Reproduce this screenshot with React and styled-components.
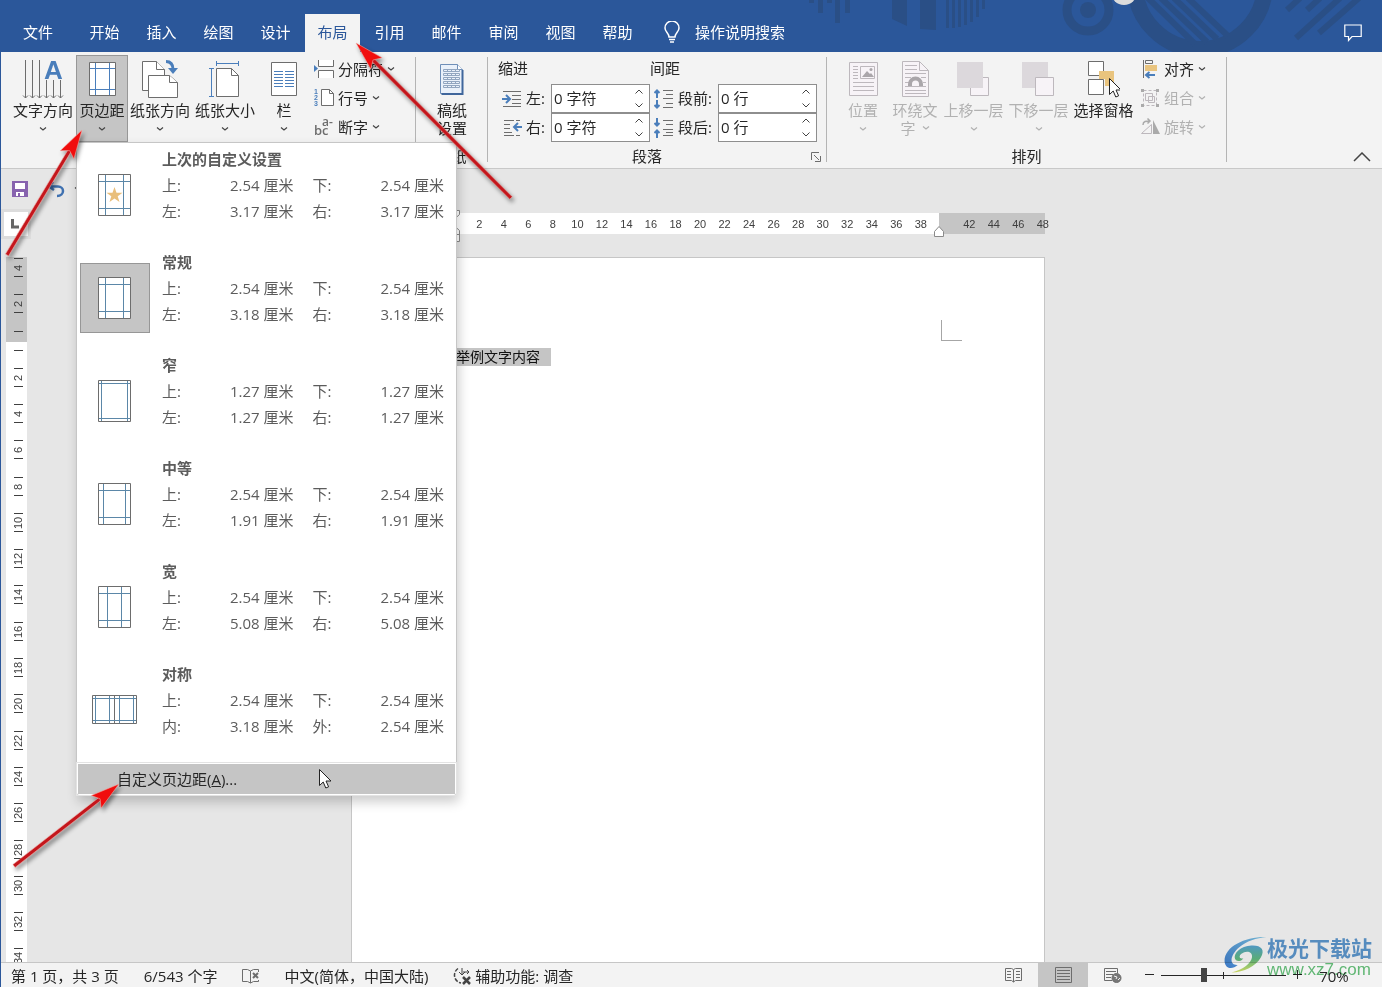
import { useState } from "react";
import styled, { createGlobalStyle, css } from "styled-components";

const GlobalStyle = createGlobalStyle`
    * {
        box-sizing: border-box;
    }

    body {
        margin: 0;
        background-color: #e6e6e6;
        color: #262626;
        font-family: "Open Sans", "Noto Sans CJK SC", sans-serif;
        font-size: 15px;
        line-height: 18px;
    }

    button, input {
        margin: 0;
        padding: 0;
        border: none;
        background: none;
        color: inherit;
        font: inherit;
    }

    svg {
        display: block;
        flex: none;
    }
`;

const Window = styled.div`
    position: relative;
    display: flex;
    flex-direction: column;
    height: 100vh;
    overflow: hidden;
    border-left: 1px solid #2b579a;
`;

/* title bar */

const TitleBar = styled.header`
    position: relative;
    display: flex;
    align-items: flex-end;
    flex: none;
    height: 52px;
    background-color: #2b579a;
    color: #fff;
`;

const Ornament = styled.svg`
    position: absolute;
    top: 0;
    right: 0;
`;

const TabList = styled.nav`
    display: flex;
    gap: 2px;
`;

const Tab = styled.button`
    width: ${({ $wide }) => ($wide ? "74px" : "55px")};
    height: 38px;
    padding-bottom: 2px;
    background-color: ${({ $active }) => ($active ? "#f3f3f3" : "transparent")};
    color: ${({ $active }) => ($active ? "#2b579a" : "#fff")};
`;

const TellMe = styled.button`
    display: flex;
    align-items: center;
    gap: 15px;
    height: 38px;
    margin-left: 19px;
    padding-bottom: 2px;
`;

const CommentButton = styled.button`
    position: relative;
    display: grid;
    place-items: center;
    width: 58px;
    height: 38px;
    margin-left: auto;
`;

/* ribbon */

const Ribbon = styled.section`
    position: relative;
    z-index: 2;
    display: flex;
    flex: none;
    height: 117px;
    background-color: #f3f3f3;
    border-bottom: 1px solid #c8c8c8;
`;

const Group = styled.div`
    display: flex;
    flex-direction: column;
    padding-top: 3px;
`;

const GroupBody = styled.div`
    display: flex;
    height: 87px;
    padding: 0 ${({ $right }) => $right || 0}px 0 ${({ $left }) => $left || 0}px;
`;

const GroupFooter = styled.div`
    display: flex;
    align-items: center;
    height: 26px;
    padding-top: 2px;
`;

const GroupLabel = styled.span`
    flex: 1;
    text-align: center;
`;

const Launcher = styled.button`
    display: grid;
    place-items: center;
    width: 20px;
    height: 20px;
    padding-top: 2px;
`;

const Divider = styled.div`
    width: 1px;
    margin: 5px 0 6px;
    background-color: #b4b4b4;
`;

const MenuAnchor = styled.div`
    position: relative;
`;

const BigButton = styled.button`
    display: flex;
    flex-direction: column;
    align-items: center;
    width: ${({ $width }) => $width}px;
    height: 87px;
    padding-top: 4px;
    border: 1px solid transparent;
    white-space: nowrap;

    ${({ $pressed }) => $pressed && css`
        border-color: #979797;
        background-color: #c5c5c5;
    `}

    &:disabled {
        color: #b1b1b1;
    }
`;

const BigIcon = styled.span`
    display: flex;
    justify-content: center;
    height: 41px;
`;

const BigLabel = styled.span`
    display: flex;
    align-items: center;
    justify-content: center;
    gap: 6px;
    height: 18px;
`;

const BigChevron = styled.span`
    padding-top: 8px;
`;

const SmallColumn = styled.div`
    display: flex;
    flex-direction: column;
    align-items: flex-start;
    margin-left: ${({ $gap }) => $gap}px;
`;

const SmallButton = styled.button`
    display: flex;
    align-items: center;
    gap: 4px;
    height: 29px;
    padding-bottom: 2px;
    white-space: nowrap;

    &:disabled {
        color: #b1b1b1;
    }
`;

const SmallIcon = styled.span`
    width: ${({ $width }) => $width}px;
`;

const FieldColumn = styled.div`
    width: ${({ $width }) => $width}px;
`;

const FieldHeading = styled.div`
    height: 29px;
    line-height: 27px;
`;

const Field = styled.div`
    display: flex;
    align-items: center;
    gap: 4px;
    height: 29px;
    padding-left: 4px;
`;

const FieldLabel = styled.label`
    flex: 1;
    padding-bottom: 2px;
    white-space: nowrap;
`;

const Spinner = styled.div`
    display: flex;
    width: 99px;
    height: 29px;
    border: 1px solid #8e8e8e;
    background-color: #fff;
`;

const SpinnerInput = styled.input`
    width: 77px;
    padding: 0 0 2px 2px;
`;

const SpinnerArrows = styled.div`
    display: flex;
    flex-direction: column;
    width: 20px;
`;

const ArrowButton = styled.button`
    display: grid;
    place-items: center;
    flex: 1;
`;

const CollapseButton = styled.button`
    align-self: flex-end;
    display: grid;
    place-items: center;
    width: 40px;
    height: 22px;
    margin-left: auto;
`;

/* margins menu */

const Menu = styled.div`
    position: absolute;
    top: 100%;
    left: 0;
    width: 381px;
    border: 1px solid #c6c6c6;
    border-radius: 0 0 3px 3px;
    background-color: #fff;
    box-shadow: 2px 6px 12px rgba(0, 0, 0, 0.2);
    color: #5c5c5c;
`;

const Preset = styled.button`
    display: flex;
    gap: 12px;
    width: 100%;
    height: 103px;
    padding: 3px 12px 0 3px;
    text-align: left;
`;

const PresetIcon = styled.span`
    display: grid;
    place-items: center;
    width: 70px;
    height: 70px;
    margin-top: 14px;
    border: 1px solid ${({ $selected }) => ($selected ? "#979797" : "transparent")};
    background-color: ${({ $selected }) => ($selected ? "#c5c5c5" : "transparent")};
`;

const PresetText = styled.span`
    display: grid;
    flex: 1;
    grid-template-columns: 1fr 1fr;
    grid-auto-rows: 26px;
    column-gap: 19px;
    line-height: 26px;
`;

const PresetName = styled.strong`
    grid-column: 1 / -1;
`;

const Measure = styled.span`
    display: flex;
    justify-content: space-between;
`;

const CustomMargins = styled.button`
    display: block;
    width: calc(100% - 2px);
    height: 30px;
    margin: 3px 1px 1px;
    padding-left: 39px;
    outline: 1px solid #e3e3e3;
    outline-offset: 1px;
    background-color: #c5c5c5;
    color: #262626;
    text-align: left;
`;

const Pointer = styled.svg`
    position: absolute;
    left: 242px;
    bottom: 6px;
`;

/* document area */

const Workspace = styled.main`
    position: relative;
    display: grid;
    flex: 1;
    grid-template-columns: 27px 1fr;
    grid-template-rows: 40px 48px 1fr;
    min-height: 0;
`;

const QuickAccess = styled.div`
    grid-column: 1 / -1;
    display: flex;
    align-items: center;
    gap: 19px;
    padding-left: 11px;
`;

const QuickButton = styled.button`
    display: flex;
    align-items: center;
    gap: 9px;
    height: 18px;
`;

const TabStop = styled.button`
    display: grid;
    place-items: center;
    width: 30px;
    height: 30px;
    border: 3px solid #dcdcdc;
    background-color: #fff;
`;

const RulerTrack = styled.div`
    display: flex;
    justify-content: center;
    padding: 4px 14px 0 0;
`;

const Ruler = styled.div`
    position: relative;
    display: flex;
    width: 694px;
    height: 21px;
    color: #404040;
    font: 11px/23px "Liberation Sans", sans-serif;
    text-align: center;
`;

const RulerPart = styled.div`
    width: ${({ $width }) => $width}px;
    padding: 0 ${({ $right }) => $right || 0}px 0 ${({ $left }) => $left || 0}px;
    background-color: ${({ $margin }) => ($margin ? "#c5c5c5" : "#fff")};
`;

const RulerNumbers = styled.div`
    display: flex;
    width: ${({ $width }) => $width}px;
`;

const RulerNumber = styled.span`
    flex: 1;
`;

const RightIndent = styled.svg`
    position: absolute;
    left: 582px;
    top: 12px;
`;

const LeftIndent = styled.svg`
    position: absolute;
    left: 98px;
    top: -4px;
`;

const SideRuler = styled.div`
    width: 21px;
    margin-left: 5px;
    overflow: hidden;
    background-color: #fff;
    color: #404040;
    font: 11px/9px "Liberation Sans", sans-serif;
`;

const SideMargin = styled.div`
    display: flex;
    flex-direction: column;
    align-items: center;
    justify-content: flex-end;
    gap: 9px;
    height: 85px;
    padding: 0 0 10px 3px;
    overflow: hidden;
    background-color: #c5c5c5;
`;

const SideBody = styled.div`
    display: flex;
    flex-direction: column;
    align-items: center;
    gap: 8px;
    padding: 8px 0 0 3px;
`;

const SideNumbers = styled.div`
    display: flex;
    flex: none;
    flex-direction: column;
    height: ${({ $height }) => $height}px;
`;

const SideStep = styled.div`
    display: flex;
    flex: 1 0 0;
    flex-direction: column;
    align-items: center;
    justify-content: center;
`;

const SideLabel = styled.span`
    display: grid;
    place-items: center;
    width: 9px;
    height: 19px;
    border: solid #404040;
    border-width: 1px 0;
    writing-mode: vertical-rl;
    transform: rotate(180deg);
`;

const SideTick = styled.span`
    flex: none;
    width: 9px;
    height: 1px;
    background-color: #404040;
`;

const PageTrack = styled.div`
    display: flex;
    justify-content: center;
    min-height: 0;
    padding-right: 14px;
    overflow: hidden;
`;

const Page = styled.article`
    width: 694px;
    border: 1px solid #c6c6c6;
    border-bottom: none;
    background-color: #fff;
`;

const PageTop = styled.div`
    display: flex;
    align-items: flex-end;
    justify-content: flex-end;
    height: 83px;
    padding-right: 82px;
`;

const CropMark = styled.div`
    width: 21px;
    height: 21px;
    border: solid #a6a6a6;
    border-width: 0 0 1px 1px;
`;

const Paragraph = styled.p`
    margin: 7px 0 0 104px;
    color: #111;
    font-size: 14px;
`;

const Selection = styled.mark`
    display: inline-block;
    padding-right: 11px;
    background-color: #c5c5c5;
    color: inherit;
`;

/* status bar */

const StatusBar = styled.footer`
    display: flex;
    flex: none;
    align-items: center;
    height: 25px;
    padding: 0 33px 0 10px;
    border-top: 1px solid #c6c6c6;
    background-color: #f3f3f3;
    white-space: nowrap;
`;

const StatusItem = styled.button`
    display: flex;
    align-items: center;
    gap: 3px;
    height: 24px;
    margin-right: 25px;
    padding-top: 2px;
`;

const ViewButton = styled.button`
    display: grid;
    place-items: center;
    width: 50px;
    height: 24px;
    background-color: ${({ $active }) => ($active ? "#c5c5c5" : "transparent")};
`;

const Views = styled.div`
    display: flex;
    margin-left: auto;
`;

const ZoomButton = styled.button`
    display: grid;
    place-items: center;
    width: 23px;
    height: 24px;
`;

const ZoomSlider = styled.input`
    appearance: none;
    width: 125px;
    height: 14px;
    background:
        linear-gradient(#262626, #262626) 62px 4px / 1px 7px no-repeat,
        linear-gradient(#262626, #262626) 0 7px / 100% 1px no-repeat;

    &::-webkit-slider-thumb {
        appearance: none;
        width: 6px;
        height: 14px;
        background-color: #444;
    }
`;

const ZoomValue = styled.button`
    width: 30px;
    height: 24px;
    margin-left: 10px;
    padding-top: 2px;
`;

/* things lying over the window */

const Arrows = styled.svg`
    position: absolute;
    inset: 0 auto auto -1px;
    z-index: 4;
    width: 100%;
    height: 100%;
    pointer-events: none;
    filter: drop-shadow(2px 3px 2px rgba(0, 0, 0, 0.45));
`;

const Watermark = styled.div`
    position: absolute;
    right: 10px;
    bottom: 6px;
    z-index: 3;
    display: flex;
    mix-blend-mode: multiply;
    pointer-events: none;
`;

const WatermarkText = styled.div`
    display: flex;
    flex-direction: column;
    color: #5f9bd3;
    font: bold 21px/24px "Noto Sans CJK SC", sans-serif;
`;

const WatermarkSite = styled.span`
    color: #66c07a;
    font: 17px/22px "Liberation Sans", sans-serif;
`;

const GRAY = "#6d6d6d";
const BLUE = "#4a7ebb";
const PALE = "#bdb8bd";

function Chevron({ color = "#444" }) {
    return (
        <svg width="8" height="4" viewBox="0 0 8 4" fill="none" stroke={color} strokeWidth="1.200">
            <path d="M1 .5l3 2.500 3-2.500" />
        </svg>
    );
}

function TextDirectionIcon() {
    const long = [3.5, 10.5, 17.5];
    const short = [24.5, 31.5, 38.5];
    return (
        <svg width="42" height="40" viewBox="0 0 42 40" fill="none" stroke={GRAY}>
            {long.map((x) => <path key={x} d={`M${x} 0v38M${x - 2.5} 35.5l2.5 2.5 2.5-2.5`} />)}
            {short.map((x) => <path key={x} d={`M${x} 20v18M${x - 2.5} 35.5l2.5 2.5 2.5-2.5`} />)}
            <text x="22" y="19" fill={BLUE} stroke="none" fontSize="26" fontWeight="bold" fontFamily="Liberation Sans, sans-serif">A</text>
        </svg>
    );
}

function MarginsIcon() {
    return (
        <svg width="28" height="38" viewBox="-1 0 28 38" fill="none">
            <path d="M.5 2.500h26v33H.5z" fill="#fff" stroke={GRAY} />
            <path d="M6.500 3v32M20.500 3v32M1 8.500h25M1 29.500h25" stroke={BLUE} />
        </svg>
    );
}

function OrientationIcon() {
    return (
        <svg width="38" height="40" viewBox="-1 0 38 40" fill="#fff" stroke={GRAY}>
            <path d="M.5 1.500h14l8 8v21H.5z" />
            <path d="M14.500 1.500v8h8" />
            <path d="M6.500 15.500h21l8 7v15h-29z" />
            <path d="M27.500 15.500v7h8" />
            <path d="M24 1.500c5 0 7 3 7 8" fill="none" stroke={BLUE} strokeWidth="3" />
            <path d="M26 8h10l-5 6z" fill={BLUE} stroke="none" />
        </svg>
    );
}

function SizeIcon() {
    return (
        <svg width="32" height="40" viewBox="0 0 32 40" fill="none" stroke={BLUE}>
            <path d="M7.500 8.500h15l7 7v21h-22z" fill="#fff" stroke={GRAY} />
            <path d="M22.500 8.500v7h7" stroke={GRAY} />
            <path d="M7.500 3.500h22M7.500 1v5M29.500 1v5M2.500 8.500v28M0 8.500h5M0 36.500h5" />
        </svg>
    );
}

function ColumnsIcon() {
    const rows = [11.5, 14.5, 17.5, 20.5, 23.5, 26.5];
    return (
        <svg width="26" height="38" viewBox="0 0 26 38" fill="none">
            <path d="M.5 2.500h25v33H.5z" fill="#fff" stroke={GRAY} />
            {rows.map((y) => <path key={y} d={`M3 ${y}h9M14 ${y}h9`} stroke={BLUE} />)}
        </svg>
    );
}

function BreaksIcon() {
    return (
        <svg width="20" height="20" viewBox="0 0 20 20" fill="none" stroke={GRAY}>
            <path d="M4.500 1v6.500h15V1M4.500 19v-7.500h15V19" fill="#fff" />
            <path d="M0 6v7l4-3.500z" fill={BLUE} stroke="none" />
        </svg>
    );
}

function LineNumbersIcon() {
    return (
        <svg width="20" height="20" viewBox="0 0 20 20" fill="none" stroke={GRAY}>
            <path d="M7.500 1.500h8l4 4v12h-12z" fill="#fff" />
            <path d="M15.500 1.500v4h4" />
            <g fill={BLUE} stroke="none" fontSize="7" fontWeight="bold" fontFamily="Liberation Sans, sans-serif">
                <text x="0" y="6">1</text>
                <text x="0" y="12">2</text>
                <text x="0" y="18">3</text>
            </g>
        </svg>
    );
}

function HyphenIcon() {
    return (
        <svg width="20" height="20" viewBox="0 0 20 20" fill={GRAY} fontFamily="Open Sans, sans-serif" fontWeight="600">
            <text x="0" y="18" fontSize="13">bc</text>
            <text x="8" y="9" fontSize="12">a-</text>
        </svg>
    );
}

function ManuscriptIcon() {
    const rows = [9, 13, 17, 21, 25];
    return (
        <svg width="26" height="38" viewBox="0 0 26 38" fill="none">
            <path d="M1.500 4.500h17l5 5v24h-22z" fill="#eaf1fa" stroke="#6f8fb8" />
            <path d="M23.500 10v24h-21" stroke="#3f669c" strokeWidth="2" />
            <path d="M18.500 4.500v5h5" fill="#fff" stroke="#6f8fb8" />
            {rows.map((y) => <path key={y} d={`M4.500 ${y + .5}h16v2h-16zM8.500 ${y + .5}v2M12.500 ${y + .5}v2M16.500 ${y + .5}v2`} stroke="#92a6c0" />)}
        </svg>
    );
}

function IndentLeftIcon() {
    return (
        <svg width="20" height="18" viewBox="0 0 20 18" fill="none" stroke={GRAY}>
            <path d="M1 1.500h18M10 5.500h9M10 9.500h9M10 13.500h9M1 16.500h18" />
            <path d="M0 9h8M4 5l4 4-4 4" stroke={BLUE} strokeWidth="2" />
        </svg>
    );
}

function IndentRightIcon() {
    return (
        <svg width="20" height="18" viewBox="0 0 20 18" fill="none" stroke={GRAY}>
            <path d="M2 1.500h10M14 1.500h4M2 5.500h6M2 9.500h6M2 13.500h8M2 16.500h10M14 16.500h4" />
            <path d="M20 8h-8M16 4l-4 4 4 4" stroke={BLUE} strokeWidth="2" />
        </svg>
    );
}

function SpaceBeforeIcon() {
    return (
        <svg width="20" height="20" viewBox="0 0 20 20" fill="none" stroke={GRAY}>
            <path d="M9 1.500h10M12 5.500h7M9 9.500h10M12 14.500h7M9 18.500h10" />
            <path d="M3 9V1M.5 4L3 1.500 5.500 4M3 11v8M.5 16L3 18.500 5.500 16" stroke={BLUE} strokeWidth="2" />
        </svg>
    );
}

function SpaceAfterIcon() {
    return (
        <svg width="20" height="20" viewBox="0 0 20 20" fill="none" stroke={GRAY}>
            <path d="M9 2.500h10M12 6.500h7M9 11.500h10M12 14.500h7M9 17.500h10" />
            <path d="M3 0v8M.5 5L3 7.500 5.500 5M3 20v-8M.5 15L3 12.500 5.500 15" stroke={BLUE} strokeWidth="2" />
        </svg>
    );
}

function PositionIcon() {
    return (
        <svg width="30" height="38" viewBox="-1 0 30 38" fill="none" stroke={PALE}>
            <path d="M.5 2.500h28v33H.5z" fill="#f7f3f7" />
            <path d="M11.500 6.500h14v12h-14z" />
            <path d="M13 17l5-6 3 3 1-1 3 4z" fill="#aaa6aa" stroke="none" />
            <circle cx="22" cy="9.500" r="1.500" fill="#aaa6aa" stroke="none" />
            <path d="M4 6.500h5M4 9.500h5M4 12.500h5M4 15.500h5M4 18.500h5M4 22.500h21M4 26.500h21M4 30.500h21" />
        </svg>
    );
}

function WrapIcon() {
    return (
        <svg width="28" height="38" viewBox="-1 0 28 38" fill="none" stroke={PALE}>
            <path d="M.5 1.500h17l9 9v26H.5z" fill="#f7f3f7" />
            <path d="M17.500 1.500v9h9" />
            <path d="M3 5.500h12M3 9.500h12M3 13.500h21M3 17.500h6M19 17.500h5M3 22.500h4M21 22.500h3M3 26.500h21M3 30.500h21M3 33.500h21" />
            <path d="M8 26v-2a5.500 5.500 0 0 1 11 0v2" strokeWidth="4" stroke="#aaa6aa" />
        </svg>
    );
}

function ForwardIcon() {
    return (
        <svg width="33" height="38" viewBox="0 0 33 38">
            <path d="M13.500 17.500h18v18h-18z" fill="#f7f3f7" stroke={PALE} />
            <path d="M0 2h26v26H0z" fill="#dcd8dc" />
        </svg>
    );
}

function BackwardIcon() {
    return (
        <svg width="33" height="38" viewBox="0 0 33 38">
            <path d="M0 2h26v26H0z" fill="#dcd8dc" />
            <path d="M13.500 17.500h18v18h-18z" fill="#f7f3f7" stroke={PALE} />
        </svg>
    );
}

function CursorShape() {
    return <path d="M.5.500v16l3.700-3.500 2.600 6 2.800-1.200-2.600-5.800h5z" fill="#fff" stroke="#222" />;
}

function SelectionPaneIcon() {
    return (
        <svg width="32" height="38" viewBox="0 0 32 38">
            <path d="M.5 1.500h15v14H.5zM.5 19.500h15v15H.5z" fill="#fff" stroke={GRAY} />
            <path d="M11 11h15v15h-9v-7h-6z" fill="#e9c47e" />
            <g transform="translate(21 18)"><CursorShape /></g>
        </svg>
    );
}

function AlignIcon() {
    return (
        <svg width="18" height="20" viewBox="0 0 18 20" fill="none">
            <path d="M2.500 1v18M4.500 1.500h7v3h-7z" stroke={GRAY} />
            <path d="M4 6h12v6H4z" fill="#e9c47e" />
            <path d="M14 16H5M8.500 13L5 16l3.500 3" stroke={BLUE} strokeWidth="2" />
        </svg>
    );
}

function GroupIcon() {
    return (
        <svg width="18" height="20" viewBox="0 0 18 20" fill="none" stroke={PALE}>
            <path d="M2.500 2.500h13v15h-13z" strokeDasharray="3 2" />
            <path d="M4.500 5.500h7v7h-7zM7.500 8.500h6v6h-6z" />
            <path d="M0 1h3v3H0zM15 1h3v3h-3zM0 16h3v3H0zM15 16h3v3h-3z" fill="#aaa" stroke="none" />
        </svg>
    );
}

function RotateIcon() {
    return (
        <svg width="19" height="18" viewBox="0 0 19 18" fill="none" stroke={PALE}>
            <path d="M.5 15.500h10v-9z" />
            <path d="M12 2v14h7z" fill="#aaa" stroke="none" />
            <path d="M2 7c0-4 3-4 7-4M6.500.500L9 3 6.500 5.500" stroke="#aaa" strokeWidth="1.500" />
        </svg>
    );
}

function PresetDrawing({ name }) {
    if (name === "对称") {
        return (
            <svg width="46" height="30" viewBox="0 0 46 30" fill="none">
                <path d="M.5.500h44v28H.5zM22.500.500v28" fill="#fff" stroke={GRAY} />
                <path d="M3.500 1v27M17.500 1v27M27.500 1v27M41.500 1v27M1 3.500h43M1 25.500h43" stroke="#5b87a8" />
            </svg>
        );
    }
    const insets = { 窄: [3, 3], 中等: [5, 7], 宽: [9, 7] };
    const [x, y] = insets[name] || [7, 7];
    return (
        <svg width="34" height="42" viewBox="0 0 34 42" fill="none">
            <path d="M.5.500h32v41H.5z" fill="#fff" stroke={GRAY} />
            <path d={`M${x + .5} 1v40M${32.5 - x} 1v40M1 ${y + .5}h31M1 ${41.5 - y}h31`} stroke="#5b87a8" />
            {name === "上次的自定义设置" && (
                <path d="M16.500 13l2 5.800h6l-4.800 3.500 1.800 5.700-5-3.500-5 3.500 1.800-5.700-4.800-3.500h6z" fill="#e9bf7b" />
            )}
        </svg>
    );
}

function TitleOrnament() {
    const fine = [28, 28, 27, 25, 22, 17, 9];
    return (
        <Ornament width="582" height="52" viewBox="800 0 582 52" fill="#2a4f86" stroke="none">
            <path d="M809 0h5v3h-5zM818 0h5v13h-5zM827 0h5v3h-5zM835 0h5v23h-5zM845 0h5v13h-5z" />
            <path d="M892 0h15v26l-15-7zM920 0h16v30l-16-1z" />
            {fine.map((h, i) => <rect key={i} x={946 + i * 6} y="0" width="3" height={h} />)}
            <circle cx="1088" cy="10" r="21" fill="none" stroke="#2a4f86" strokeWidth="9" />
            <circle cx="1088" cy="10" r="8" />
            <circle cx="1200" cy="-16" r="65" fill="none" stroke="#2a4f86" strokeWidth="16" />
            <path d="M1148-2l47 46M1161-2l46 44M1174-2l43 41M1188-2l40 38" stroke="#2a4f86" strokeWidth="6" />
            <path d="M1300-2l-13 12M1320-2l-13 12M1340-2l-44 40M1359-2l-40 35" stroke="#2a4f86" strokeWidth="6" />
            <circle cx="1124" cy="-8" r="13" fill="#dcdcdc" />
        </Ornament>
    );
}

function Arrow({ from, to }) {
    const [x1, y1] = from;
    const [x2, y2] = to;
    const length = Math.hypot(x2 - x1, y2 - y1);
    const angle = (Math.atan2(y2 - y1, x2 - x1) * 180) / Math.PI;
    return (
        <g transform={`translate(${x1} ${y1}) rotate(${angle})`} stroke="#f2b0a8" strokeWidth="0.5">
            <path d={`M0-1.800H${length - 20}v3.600H0z`} fill="#c4161c" />
            <path d={`M${length} 0l-29-8 5 8-5 8z`} fill="#f00d0d" />
        </g>
    );
}

const TABS = ["文件", "开始", "插入", "绘图", "设计", "布局", "引用", "邮件", "审阅", "视图", "帮助"];

const PRESETS = [
    { name: "上次的自定义设置", values: [["上:", "2.54"], ["下:", "2.54"], ["左:", "3.17"], ["右:", "3.17"]] },
    { name: "常规", values: [["上:", "2.54"], ["下:", "2.54"], ["左:", "3.18"], ["右:", "3.18"]] },
    { name: "窄", values: [["上:", "1.27"], ["下:", "1.27"], ["左:", "1.27"], ["右:", "1.27"]] },
    { name: "中等", values: [["上:", "2.54"], ["下:", "2.54"], ["左:", "1.91"], ["右:", "1.91"]] },
    { name: "宽", values: [["上:", "2.54"], ["下:", "2.54"], ["左:", "5.08"], ["右:", "5.08"]] },
    { name: "对称", values: [["上:", "2.54"], ["下:", "2.54"], ["内:", "3.18"], ["外:", "2.54"]] },
];

const evens = (from, to) => Array.from({ length: (to - from) / 2 + 1 }, (_, i) => from + i * 2);

function RibbonButton({ label, icon, width, disabled, pressed, plain }) {
    return (
        <BigButton $width={width} $pressed={pressed} disabled={disabled}>
            <BigIcon>{icon}</BigIcon>
            <BigLabel>{label}</BigLabel>
            {!plain && <BigChevron><Chevron color={disabled ? "#b1b1b1" : "#444"} /></BigChevron>}
        </BigButton>
    );
}

function RibbonItem({ label, icon, width, disabled }) {
    return (
        <SmallButton disabled={disabled}>
            <SmallIcon $width={width}>{icon}</SmallIcon>
            {label}
            <Chevron color={disabled ? "#b1b1b1" : "#444"} />
        </SmallButton>
    );
}

function SpinField({ id, label, icon, initial }) {
    const [value, setValue] = useState(initial);
    return (
        <Field>
            {icon}
            <FieldLabel htmlFor={id}>{label}</FieldLabel>
            <Spinner>
                <SpinnerInput id={id} value={value} onChange={(e) => setValue(e.target.value)} />
                <SpinnerArrows>
                    <ArrowButton>
                        <svg width="8" height="5" viewBox="0 0 8 5" fill="none" stroke="#444"><path d="M.5 4.500L4 1l3.500 3.500" /></svg>
                    </ArrowButton>
                    <ArrowButton>
                        <svg width="8" height="5" viewBox="0 0 8 5" fill="none" stroke="#444"><path d="M.5.500L4 4 7.500.500" /></svg>
                    </ArrowButton>
                </SpinnerArrows>
            </Spinner>
        </Field>
    );
}

function MarginsMenu() {
    return (
        <Menu>
            {PRESETS.map(({ name, values }) => (
                <Preset key={name}>
                    <PresetIcon $selected={name === "常规"}><PresetDrawing name={name} /></PresetIcon>
                    <PresetText>
                        <PresetName>{name}</PresetName>
                        {values.map(([side, size]) => (
                            <Measure key={side}><span>{side}</span><span>{size} 厘米</span></Measure>
                        ))}
                    </PresetText>
                </Preset>
            ))}
            <CustomMargins>自定义页边距(<u>A</u>)...</CustomMargins>
            <Pointer width="13" height="20" viewBox="0 0 13 20"><CursorShape /></Pointer>
        </Menu>
    );
}

export default function App() {
    const [activeTab, setActiveTab] = useState("布局");
    const [zoom, setZoom] = useState(34);

    return (
        <Window lang="zh-CN">
            <GlobalStyle />
            <TitleBar>
                <TitleOrnament />
                <TabList>
                    {TABS.map((tab, i) => (
                        <Tab key={tab} $wide={i === 0} $active={tab === activeTab} onClick={() => setActiveTab(tab)}>{tab}</Tab>
                    ))}
                </TabList>
                <TellMe>
                    <svg width="16" height="22" viewBox="0 0 16 22" fill="none" stroke="#fff" strokeWidth="1.500">
                        <path d="M5 16c0-4-4-5-4-9a7 7 0 0 1 14 0c0 4-4 5-4 9zM5 18.500h6M6 21h4" />
                    </svg>
                    操作说明搜索
                </TellMe>
                <CommentButton aria-label="批注">
                    <svg width="18" height="18" viewBox="0 0 18 18" fill="none" stroke="#fff" strokeWidth="1.200">
                        <path d="M.8 1h16.400v11.500H8l-3.500 4v-4H.8z" />
                    </svg>
                </CommentButton>
            </TitleBar>

            <Ribbon>
                <Group>
                    <GroupBody $left={9} $right={20}>
                        <RibbonButton label="文字方向" width={66} icon={<TextDirectionIcon />} />
                        <MenuAnchor>
                            <RibbonButton label="页边距" width={52} icon={<MarginsIcon />} pressed />
                            <MarginsMenu />
                        </MenuAnchor>
                        <RibbonButton label="纸张方向" width={64} icon={<OrientationIcon />} />
                        <RibbonButton label="纸张大小" width={66} icon={<SizeIcon />} />
                        <RibbonButton label="栏" width={52} icon={<ColumnsIcon />} />
                        <SmallColumn $gap={4}>
                            <RibbonItem label="分隔符" width={20} icon={<BreaksIcon />} />
                            <RibbonItem label="行号" width={20} icon={<LineNumbersIcon />} />
                            <RibbonItem label="断字" width={20} icon={<HyphenIcon />} />
                        </SmallColumn>
                    </GroupBody>
                </Group>
                <Divider />
                <Group>
                    <GroupBody $left={10} $right={9}>
                        <BigButton $width={52}>
                            <BigIcon><ManuscriptIcon /></BigIcon>
                            <BigLabel>稿纸</BigLabel>
                            <BigLabel>设置</BigLabel>
                        </BigButton>
                    </GroupBody>
                    <GroupFooter><GroupLabel>稿纸</GroupLabel></GroupFooter>
                </Group>
                <Divider />
                <Group>
                    <GroupBody $left={10} $right={9}>
                        <FieldColumn $width={152}>
                            <FieldHeading>缩进</FieldHeading>
                            <SpinField id="indent-left" label="左:" initial="0 字符" icon={<IndentLeftIcon />} />
                            <SpinField id="indent-right" label="右:" initial="0 字符" icon={<IndentRightIcon />} />
                        </FieldColumn>
                        <FieldColumn $width={167}>
                            <FieldHeading>间距</FieldHeading>
                            <SpinField id="space-before" label="段前:" initial="0 行" icon={<SpaceBeforeIcon />} />
                            <SpinField id="space-after" label="段后:" initial="0 行" icon={<SpaceAfterIcon />} />
                        </FieldColumn>
                    </GroupBody>
                    <GroupFooter>
                        <GroupLabel>段落</GroupLabel>
                        <Launcher aria-label="段落设置">
                            <svg width="10" height="10" viewBox="0 0 10 10" fill="none" stroke={GRAY}>
                                <path d="M.5 8V.500H8M3 3l5 5M9.500 4v5.500H4" />
                            </svg>
                        </Launcher>
                    </GroupFooter>
                </Group>
                <Divider />
                <Group>
                    <GroupBody $left={10} $right={20}>
                        <RibbonButton label="位置" width={52} icon={<PositionIcon />} disabled />
                        <BigButton $width={52} disabled>
                            <BigIcon><WrapIcon /></BigIcon>
                            <BigLabel>环绕文</BigLabel>
                            <BigLabel>字 <Chevron color="#b1b1b1" /></BigLabel>
                        </BigButton>
                        <RibbonButton label="上移一层" width={65} icon={<ForwardIcon />} disabled />
                        <RibbonButton label="下移一层" width={65} icon={<BackwardIcon />} disabled />
                        <RibbonButton label="选择窗格" width={65} icon={<SelectionPaneIcon />} plain />
                        <SmallColumn $gap={5}>
                            <RibbonItem label="对齐" width={19} icon={<AlignIcon />} />
                            <RibbonItem label="组合" width={19} icon={<GroupIcon />} disabled />
                            <RibbonItem label="旋转" width={19} icon={<RotateIcon />} disabled />
                        </SmallColumn>
                    </GroupBody>
                    <GroupFooter><GroupLabel>排列</GroupLabel></GroupFooter>
                </Group>
                <Divider />
                <CollapseButton aria-label="折叠功能区">
                    <svg width="18" height="10" viewBox="0 0 18 10" fill="none" stroke="#444" strokeWidth="1.500">
                        <path d="M1 9l8-8 8 8" />
                    </svg>
                </CollapseButton>
            </Ribbon>

            <Workspace>
                <QuickAccess>
                    <QuickButton aria-label="保存">
                        <svg width="16" height="17" viewBox="0 0 16 17">
                            <path d="M0 0h16v16H0z" fill="#8763ae" />
                            <path d="M3 2h10v6H3zM4 11h8v4H4z" fill="#fff" />
                            <path d="M6 12h2v3H6z" fill="#8763ae" />
                        </svg>
                    </QuickButton>
                    <QuickButton aria-label="撤消">
                        <svg width="18" height="17" viewBox="0 0 18 17" fill="none" stroke="#3f71b0" strokeWidth="2.500">
                            <path d="M6 1L2 5.500 7 9M2 5.500h9c3 0 5 2 5 4.500s-2 5-6 5" />
                        </svg>
                        <Chevron />
                    </QuickButton>
                </QuickAccess>
                <TabStop aria-label="制表符">
                    <svg width="10" height="10" viewBox="0 0 10 10" fill="none" stroke="#666" strokeWidth="3">
                        <path d="M1.500 0v8H8" />
                    </svg>
                </TabStop>
                <RulerTrack>
                    <Ruler>
                        <RulerPart $width={104} $margin />
                        <RulerPart $width={484} $left={12} $right={6}>
                            <RulerNumbers $width={466}>
                                {evens(2, 38).map((n) => <RulerNumber key={n}>{n}</RulerNumber>)}
                            </RulerNumbers>
                        </RulerPart>
                        <RulerPart $width={106} $left={18} $margin>
                            <RulerNumbers $width={98}>
                                {evens(42, 48).map((n) => <RulerNumber key={n}>{n}</RulerNumber>)}
                            </RulerNumbers>
                        </RulerPart>
                        <LeftIndent width="12" height="33" viewBox="0 0 12 33" fill="#fff" stroke="#8a8a8a">
                            <path d="M1.500 1.500h9v4l-4.500 4-4.500-4zM1.500 32.500v-11l4.500-4 4.500 4v11zM1.500 25.500h9" />
                        </LeftIndent>
                        <RightIndent width="12" height="13" viewBox="0 0 12 13" fill="#fff" stroke="#8a8a8a">
                            <path d="M1.500 11.500v-5l4.500-5 4.500 5v5z" />
                        </RightIndent>
                    </Ruler>
                </RulerTrack>
                <SideRuler>
                    <SideMargin>
                        <SideNumbers $height={73}>
                            <SideStep><SideLabel>4</SideLabel></SideStep>
                            <SideStep><SideLabel>2</SideLabel></SideStep>
                        </SideNumbers>
                        <SideTick />
                    </SideMargin>
                    <SideBody>
                        <SideTick />
                        <SideNumbers $height={617}>
                            {evens(2, 34).map((n) => <SideStep key={n}><SideLabel>{n}</SideLabel></SideStep>)}
                        </SideNumbers>
                    </SideBody>
                </SideRuler>
                <PageTrack>
                    <Page>
                        <PageTop><CropMark /></PageTop>
                        <Paragraph><Selection>举例文字内容</Selection></Paragraph>
                    </Page>
                </PageTrack>
            </Workspace>

            <StatusBar>
                <StatusItem>第 1 页，共 3 页</StatusItem>
                <StatusItem>6/543 个字</StatusItem>
                <StatusItem aria-label="校对">
                    <svg width="17" height="16" viewBox="0 0 17 16" fill="none" stroke={GRAY}>
                        <path d="M16.500 4V1.500h-5l-3 1.500-3-1.500h-5v12h5l3 1.500 3-1.500h5V12M8.500 3v12" />
                        <path d="M11 5l5 5M16 5l-5 5" strokeWidth="2" />
                    </svg>
                </StatusItem>
                <StatusItem>中文(简体，中国大陆)</StatusItem>
                <StatusItem>
                    <svg width="19" height="18" viewBox="0 0 19 18" fill="none" stroke="#444">
                        <path d="M5 1.500a8 8 0 0 0 3 14.500" strokeDasharray="4 1.500" strokeWidth="1.500" />
                        <path d="M9 1v7M6 5l3 3 3-3M10 5h6M14 3l2 2-2 2" />
                        <path d="M10 10l7 7M17 10l-7 7" strokeWidth="2.500" />
                    </svg>
                    辅助功能: 调查
                </StatusItem>
                <Views>
                    <ViewButton aria-label="阅读视图">
                        <svg width="17" height="16" viewBox="0 0 17 16" fill="none" stroke={GRAY}>
                            <path d="M.5 1.500h6l2 1 2-1h6v12h-6l-2 1.500-2-1.500h-6zM8.500 3v12" />
                            <path d="M2 4.500h4M2 7.500h4M2 10.500h4M11 4.500h4M11 7.500h4M11 10.500h4" />
                        </svg>
                    </ViewButton>
                    <ViewButton aria-label="页面视图" $active>
                        <svg width="17" height="16" viewBox="0 0 17 16" fill="none" stroke={GRAY}>
                            <path d="M.5.500h16v15H.5zM2 3.500h13M2 6.500h13M2 9.500h13M2 12.500h13" />
                        </svg>
                    </ViewButton>
                    <ViewButton aria-label="Web 版式视图">
                        <svg width="18" height="16" viewBox="0 0 18 16" fill="none" stroke={GRAY}>
                            <path d="M8 13.500H.5v-12h13V6M2 4.500h10M2 7.500h7M2 10.500h5" />
                            <circle cx="12.500" cy="11" r="4.500" fill="#777" />
                            <path d="M10 9l3 1-1 2M14 13l2-2" stroke="#f3f3f3" />
                        </svg>
                    </ViewButton>
                </Views>
                <ZoomButton aria-label="缩小">
                    <svg width="10" height="10" viewBox="0 0 10 10" stroke="#262626"><path d="M0 4.500h9" /></svg>
                </ZoomButton>
                <ZoomSlider type="range" aria-label="显示比例" value={zoom} onChange={(e) => setZoom(Number(e.target.value))} />
                <ZoomButton aria-label="放大">
                    <svg width="10" height="10" viewBox="0 0 10 10" stroke="#262626"><path d="M0 4.500h9M4.500 0v9" /></svg>
                </ZoomButton>
                <ZoomValue>70%</ZoomValue>
            </StatusBar>

            <Watermark>
                <svg width="43" height="42" viewBox="22 36 138 126">
                    <defs>
                        <linearGradient id="sky" x1="1" y1="0" x2="0" y2="1">
                            <stop offset="0" stopColor="#7ec8ea" />
                            <stop offset="1" stopColor="#3f7fd0" />
                        </linearGradient>
                        <linearGradient id="leaf" x1="0" y1="0" x2="0" y2="1">
                            <stop offset="0" stopColor="#58a9d8" />
                            <stop offset="0.5" stopColor="#63bf83" />
                            <stop offset="1" stopColor="#d6df63" />
                        </linearGradient>
                    </defs>
                    <path d="M158 38C90 36 20 70 24 118c4 24 26 24 42 10-28 2-26-30 4-56 25-22 55-30 88-34z" fill="url(#sky)" />
                    <path d="M60 112c-12-16 10-42 44-46 36-4 52 12 36 38-16 28-54 48-94 48 38-10 64-30 66-50 2-18-20-22-34-10-10 8-6 18 6 14-6 10-18 12-24 6z" fill="url(#leaf)" />
                </svg>
                <WatermarkText>
                    极光下载站
                    <WatermarkSite>www.xz7.com</WatermarkSite>
                </WatermarkText>
            </Watermark>

            <Arrows>
                <Arrow from={[511, 198]} to={[356, 43]} />
                <Arrow from={[7, 255]} to={[82, 130]} />
                <Arrow from={[14, 866]} to={[119, 784]} />
            </Arrows>
        </Window>
    );
}
